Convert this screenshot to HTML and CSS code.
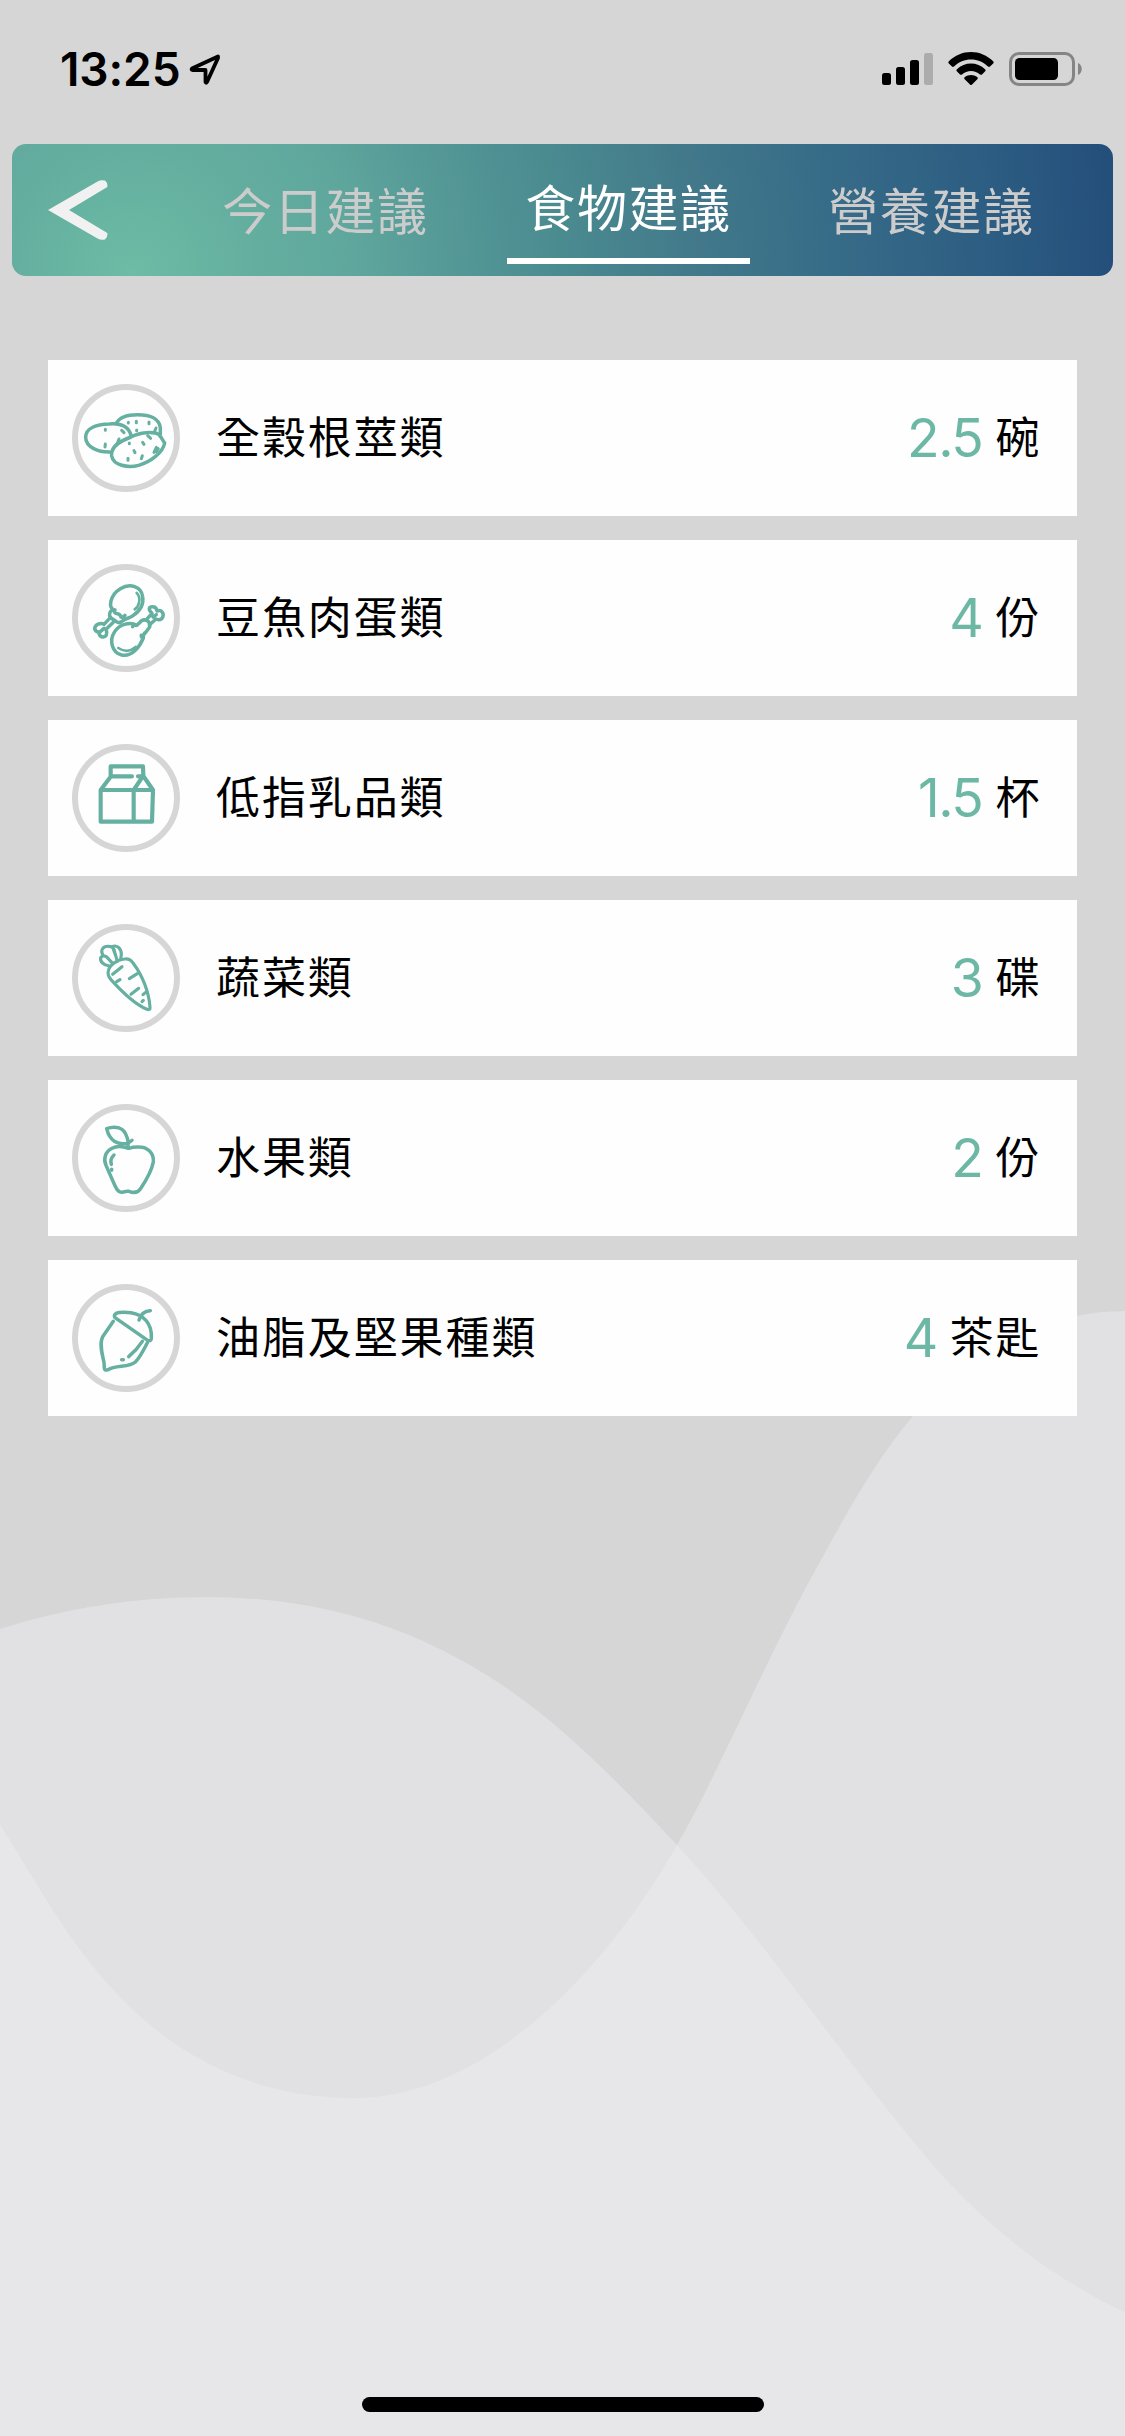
FILE: index.html
```html
<!DOCTYPE html>
<html lang="zh-Hant">
<head>
<meta charset="utf-8">
<title>食物建議</title>
<link rel="stylesheet" href="styles.css">
</head>
<body>
<div class="screen">
  <svg class="waves" viewBox="0 0 1125 2436" aria-hidden="true">
    <path d="M0 1629C65 1608 136 1597 206 1597C303 1597 386 1619 459 1659C540 1702 605 1768 677 1845C765 1940 845 2062 933 2165C995 2235 1057 2280 1125 2312V2436H0Z"/>
    <path d="M0 1825C30 1870 60 1930 108 1984C175 2060 260 2098 354 2098C480 2098 600 1980 677 1845C715 1780 775 1640 821 1560C850 1507 878 1457 913 1416C970 1350 1045 1311 1125 1311V2436H0Z"/>
  </svg>

  <div class="status">
    <span class="time">13:25</span>
    <svg class="locate" width="34" height="34" viewBox="0 0 34 34"><path d="M30 4.500L4 16.500Q3 17.600 4.500 18H17.500V30Q18 31.500 19 30L30 6Z"/></svg>
    <div class="indicators">
      <svg width="52" height="34" viewBox="0 0 52 34"><rect x="0" y="21" width="9" height="12" rx="2.500"/><rect x="14" y="15" width="9" height="18" rx="2.500"/><rect x="28" y="8" width="9" height="25" rx="2.500"/><rect class="dim" x="42" y="1" width="9" height="32" rx="2.500"/></svg>
      <svg class="wifi" width="46" height="34" viewBox="0 0 46 34"><path d="M.6 9.600Q0 10.500.8 11.400L4 14.600Q5 15.400 6 14.500C15 5 31 5 40 14.500Q41 15.400 42 14.600L45.200 11.400Q46 10.500 45.400 9.600C33-3.200 13-3.200.6 9.600Z"/><path d="M8.700 17.400Q8 18.400 8.800 19.300L12 22.500Q13 23.200 14 22.500C19 17.800 27 17.800 32 22.500Q33 23.200 34 22.500L37.200 19.300Q38 18.400 37.300 17.400C29 9.500 17 9.500 8.700 17.400Z"/><path d="M16.500 25.300Q15.700 26.300 16.700 27.200L22.200 32.700Q23 33.300 23.800 32.700L29.300 27.200Q30.300 26.300 29.500 25.300C25.500 22.200 20.500 22.200 16.500 25.300Z"/></svg>
      <svg width="74" height="34" viewBox="0 0 74 34"><rect class="shell" x="1.500" y="1.500" width="63" height="31" rx="8.500"/><rect x="6" y="6" width="43" height="22" rx="4.500"/><path class="nub" d="M69 11C74 13 74 21 69 23Z"/></svg>
    </div>
  </div>

  <nav class="tabs">
    <svg class="back" width="60" height="60" viewBox="0 0 60 60"><path d="M0 30L50 1.200Q53-.5 57 .5Q60 3 59.300 7L21 30L59.300 53Q60 57 57 59.500Q53 60.500 50 58.800Z"/></svg>
    <span class="tab">今日建議</span>
    <span class="tab active">食物建議</span>
    <span class="tab">營養建議</span>
  </nav>

  <main class="list">
    <section class="card">
      <svg class="icon" viewBox="54 60 288 288"><path d="M153 246C116 248 77 232 77 202C77 174 110 163 148 162C188 159 207 174 213 196"/><path d="M169 160C179 139 204 134 233 134C270 134 298 146 301 173L301 193"/><path d="M157 242C163 222 187 211 213 201C238 187 281 183 297 194C306 203 308 212 314 219C309 247 272 276 236 286C203 295 160 286 155 258Q154 248 157 242Z"/><path class="spot" d="M136 178v3M205 157v2M229 154v4M267 156v5M230 180v2M185 181l7 7M208 219v2M263 197l9 8M248 217l4 6M222 242l3 6M204 265v6M136 222l-1 9M177 207l-4 10M288 174l-5 12M247 257l-3 9M289 232l-7 15M295 236l-6 9"/></svg>
      <span class="name">全穀根莖類</span><span class="amount">2.5</span><span class="unit">碗</span>
    </section>
    <section class="card">
      <svg class="icon" viewBox="54 60 288 288"><path d="M165 180C141 177 151 134 181 116C210 99 244 109 248 140C252 164 239 183 219 197C207 206 195 204 186 214Q178 222 168 214L154 205Q145 197 151 185Q157 178 165 180Q160 190 172 191Q181 192 183 201Q190 203 195 196"/><path d="M151 203L132 223C121 217 105 223 104 236Q106 246 117 246C116 261 132 266 139 255Q142 247 138 238L160 217M132 235L122 244"/><path d="M230 226C212 214 179 222 164 245C146 273 157 309 185 315C218 321 240 288 250 264Q248 253 258 246L269 231Q272 217 260 211Q247 206 238 219L230 226Q220 225 218 230M250 264Q243 262 244 256"/><path d="M260 208L276 190C262 177 268 169 279 170Q289 170 291 183C305 178 313 190 308 202Q303 213 288 207L268 225M279 201L289 194"/><path class="fine" d="M230 129Q241 139 237 158Q234 172 224 178M175 294Q203 312 227 291"/></svg>
      <span class="name">豆魚肉蛋類</span><span class="amount">4</span><span class="unit">份</span>
    </section>
    <section class="card">
      <svg class="icon boxy" viewBox="54 60 288 288"><path d="M152 139V109H249L250 138L279 180L276 275H122V180L153 139H216M122 180H279M221 275V180L248 140M234 139H243"/></svg>
      <span class="name">低指乳品類</span><span class="amount">1.5</span><span class="unit">杯</span>
    </section>
    <section class="card">
      <svg class="icon slim" viewBox="54 60 288 288"><path d="M145 183C147 166 173 148 194 147Q210 145 219 159C246 194 267 245 270 292Q271 302 259 297C222 281 184 243 155 211Q141 196 145 183Z"/><path d="M148 168C129 166 120 154 122 143Q127 134 139 140L158 160M130 137C119 121 129 107 147 109Q158 109 162 119L172 154M156 110C169 104 184 113 184 133L182 149M158 112L167 137"/><path d="M186 170L158 193M180 209L170 215M232 191L208 206M236 235L213 253M257 247L249 254M250 271L246 275"/></svg>
      <span class="name">蔬菜類</span><span class="amount">3</span><span class="unit">碟</span>
    </section>
    <section class="card">
      <svg class="icon" viewBox="54 60 288 288"><path d="M206 175C187 168 171 166 156 175C135 184 130 209 138 226L164 285C171 301 177 309 190 306Q199 303 207 304C220 309 232 310 241 297C257 273 276 240 280 215C282 187 260 171 238 171Q222 170 206 175Z"/><path d="M140 116C168 105 190 116 197 132Q203 143 205 161C171 163 149 154 140 116ZM204 174V159L216 151"/><path d="M162 195Q149 207 154 223M155 238v3"/></svg>
      <span class="name">水果類</span><span class="amount">2</span><span class="unit">份</span>
    </section>
    <section class="card">
      <svg class="icon" viewBox="54 60 288 288"><path d="M165 143C155 125 192 125 213 128C251 134 276 160 274 203Q275 215 263 211ZM237 150Q245 123 271 122M160 154L128 200C117 222 127 253 132 278L133 295Q134 303 144 299C168 285 208 293 226 276C241 261 251 240 262 218M247 214Q230 240 206 260M185 269h5"/></svg>
      <span class="name">油脂及堅果種類</span><span class="amount">4</span><span class="unit">茶匙</span>
    </section>
  </main>
  <div class="home-bar"></div>
</div>
</body>
</html>
```
FILE: styles.css
```css
body {
  margin: 0;
  background: #d6d6d6;
  font-family: Inter, "Noto Sans CJK TC", sans-serif;
  color: #000;
}

.screen {
  position: relative;
  width: 1125px;
  height: 2436px;
  display: flex;
  flex-direction: column;
  overflow: hidden;
}

/* Overlapping translucent waves behind the content */
.waves {
  position: absolute;
  inset: 0;
  z-index: -1;
  fill: rgba(238, 238, 241, 0.46);
}

.status {
  height: 144px;
  box-sizing: border-box;
  padding: 52px 42px 0 60px;
  display: flex;
  align-items: flex-start;
}

.time {
  width: 128px;
  font-size: 46px;
  font-weight: 600;
  line-height: 35px;
  letter-spacing: -0.100px;
}

.locate {
  fill: none;
  stroke: #000;
  stroke-width: 3.800;
  stroke-linejoin: round;
}

.indicators {
  margin-left: auto;
  display: flex;
}

.wifi {
  margin: 0 15px 0 14px;
}

.dim {
  fill: #acacac;
}

.shell {
  fill: none;
  stroke: #858585;
  stroke-width: 3;
}

.nub {
  fill: #858585;
}

.tabs {
  height: 132px;
  margin: 0 12px;
  box-sizing: border-box;
  padding-left: 36px;
  border-radius: 14px;
  display: flex;
  align-items: flex-start;
  background: radial-gradient(circle at 120px 130px, #6dbca5 0, #64ae9f 125px, #5fa79d 220px, #579b98 300px, #4a8b90 430px, #42788a 570px, #376c88 700px, #2c5c82 870px, #244f7b 980px);
}

.back {
  margin: 36px 96px 0 0;
  fill: #f1f1f1;
}

.tab {
  box-sizing: border-box;
  width: 243px;
  height: 120px;
  padding-top: 32px;
  text-align: center;
  font-size: 50px;
  line-height: 72px;
  letter-spacing: 1.600px;
  color: #ccc;
}

.tab + .tab {
  margin-left: 60px;
}

.tab.active {
  padding-top: 29px;
  border-bottom: 6px solid #fff;
  color: #fff;
}

.list {
  margin: 84px 48px 0;
  display: flex;
  flex-direction: column;
  gap: 24px;
}

.card {
  height: 156px;
  box-sizing: border-box;
  padding: 0 36px 0 24px;
  display: flex;
  align-items: center;
  background: #fefefe;
}

.icon {
  box-sizing: border-box;
  width: 108px;
  height: 108px;
  border: 6px solid #d6d6d6;
  border-radius: 50%;
  fill: none;
  stroke: #65b0a0;
  stroke-width: 10.500;
  stroke-linecap: round;
  stroke-linejoin: round;
}

.spot {
  stroke-width: 9;
}

.fine {
  stroke-width: 8;
}

.boxy {
  stroke-width: 12.500;
}

.slim {
  stroke-width: 9.500;
}

.name {
  margin-left: 36px;
  flex: 1;
  font-size: 44px;
  letter-spacing: 1.900px;
  line-height: 60px;
}

.amount {
  margin-right: 13px;
  font-size: 53.500px;
  letter-spacing: -1.500px;
  line-height: 60px;
  color: #6db7a5;
}

.unit {
  font-size: 44px;
  letter-spacing: 1.600px;
  line-height: 60px;
}

.home-bar {
  width: 402px;
  height: 15px;
  margin: auto auto 24px;
  position: relative;
  border-radius: 8px;
  background: #000;
}
```
